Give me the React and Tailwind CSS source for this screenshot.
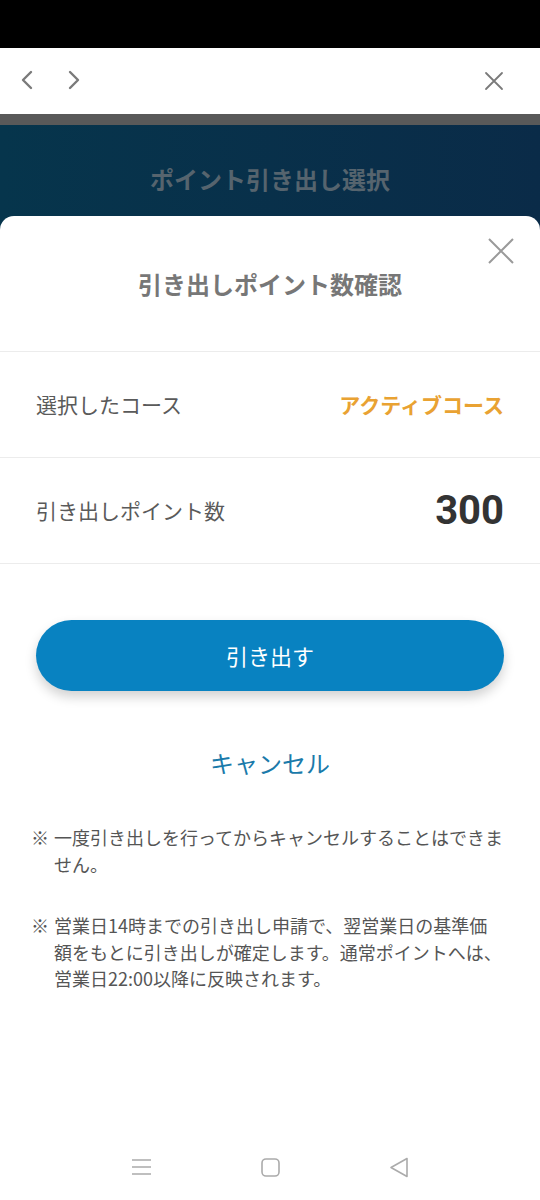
import React from "react";

const FONT = { fontFamily: '"Noto Sans CJK JP", "Noto Sans", sans-serif' };

function Row({ label, children }) {
  return (
    <div className="flex h-[106px] items-center justify-between border-b border-[#ececec] px-[36px]">
      <span className="text-[21px] text-[#5a5a5a]">{label}</span>
      {children}
    </div>
  );
}

export default function App() {
  return (
    <div className="flex h-[1200px] w-[540px] flex-col bg-white" style={FONT}>
      <div className="h-[48px] bg-black" />

      <div className="relative h-[66px] bg-white">
        <svg className="absolute left-[20px] top-[21px]" width="14" height="22" viewBox="0 0 14 22">
          <path d="M11 3 L3 11 L11 19" fill="none" stroke="#7a7a7a" strokeWidth="2.4" strokeLinecap="round" strokeLinejoin="round" />
        </svg>
        <svg className="absolute left-[67px] top-[21px]" width="14" height="22" viewBox="0 0 14 22">
          <path d="M3 3 L11 11 L3 19" fill="none" stroke="#7a7a7a" strokeWidth="2.4" strokeLinecap="round" strokeLinejoin="round" />
        </svg>
        <svg className="absolute left-[484px] top-[23px]" width="20" height="20" viewBox="0 0 20 20">
          <path d="M2 2 L18 18 M18 2 L2 18" fill="none" stroke="#7a7a7a" strokeWidth="1.8" strokeLinecap="round" />
        </svg>
      </div>

      <div className="h-[11px] bg-[#595959]" />

      <div className="flex flex-1 flex-col bg-gradient-to-r from-[#06354c] to-[#0a2b48]">
        <div className="flex h-[91px] justify-center pt-[38px]">
          <span className="text-[24px] font-bold leading-[32px] text-[#56646e]">ポイント引き出し選択</span>
        </div>

        <div className="relative flex flex-1 flex-col rounded-t-[14px] bg-white">
          <svg className="absolute right-[26px] top-[22px]" width="26" height="26" viewBox="0 0 26 26">
            <path d="M1 1 L25 25 M25 1 L1 25" fill="none" stroke="#9a9a9a" strokeWidth="2" />
          </svg>

          <div className="flex h-[136px] items-center justify-center border-b border-[#ececec]">
            <h1 className="text-[24px] font-bold text-[#777777]">引き出しポイント数確認</h1>
          </div>

          <Row label="選択したコース">
            <span className="text-[21px] font-bold text-[#e9a232]">アクティブコース</span>
          </Row>
          <Row label="引き出しポイント数">
            <span className="text-[40px] font-bold text-[#333333]" style={{ fontFamily: "Roboto, sans-serif" }}>300</span>
          </Row>

          <button className="mx-[36px] mt-[56px] h-[71px] rounded-full bg-[#0882c1] text-[22px] text-white shadow-[0_6px_12px_rgba(0,0,0,0.18)]">
            引き出す
          </button>

          <div className="mt-[54px] text-center text-[24px] leading-[36px] text-[#1a7aaa]">キャンセル</div>

          <div className="mt-[43px] pl-[31px] text-[18px] leading-[26.5px] text-[#555555]">
            <div className="flex">
              <span className="w-[23px] shrink-0">※</span>
              <p className="whitespace-nowrap">
                一度引き出しを行ってからキャンセルすることはできま
                <br />
                せん。
              </p>
            </div>
            <div className="mt-[35px] flex">
              <span className="w-[23px] shrink-0">※</span>
              <p className="whitespace-nowrap">
                営業日14時までの引き出し申請で、翌営業日の基準価
                <br />
                額をもとに引き出しが確定します。通常ポイントへは、
                <br />
                営業日22:00以降に反映されます。
              </p>
            </div>
          </div>

          <div className="mt-auto flex h-[66px] items-center">
            <div className="flex w-full items-center">
              <svg className="ml-[132px]" width="19" height="18" viewBox="0 0 19 18">
                <path d="M0 2 H19 M0 9 H19 M0 16 H19" stroke="#ababab" strokeWidth="1.5" />
              </svg>
              <svg className="ml-[110px]" width="19" height="19" viewBox="0 0 19 19">
                <rect x="1" y="1" width="17" height="17" rx="4" fill="none" stroke="#ababab" strokeWidth="1.6" />
              </svg>
              <svg className="ml-[109px]" width="20" height="21" viewBox="0 0 20 21">
                <path d="M18 1.5 L18 19.5 L2 10.5 Z" fill="none" stroke="#ababab" strokeWidth="1.6" strokeLinejoin="round" />
              </svg>
            </div>
          </div>
        </div>
      </div>
    </div>
  );
}
